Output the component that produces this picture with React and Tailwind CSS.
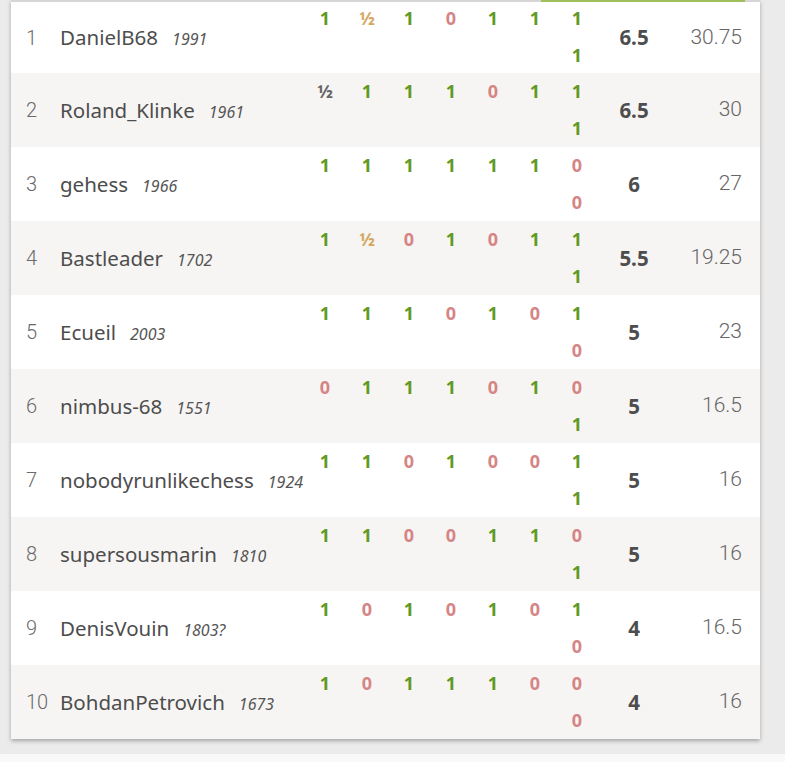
import React from 'react';

const players = [
  { rank: 1, name: 'DanielB68', rating: '1991', res: ['1', '½', '1', '0', '1', '1', '1', '1'], pts: '6.5', tb: '30.75' },
  { rank: 2, name: 'Roland_Klinke', rating: '1961', res: ['b', '1', '1', '1', '0', '1', '1', '1'], pts: '6.5', tb: '30' },
  { rank: 3, name: 'gehess', rating: '1966', res: ['1', '1', '1', '1', '1', '1', '0', '0'], pts: '6', tb: '27' },
  { rank: 4, name: 'Bastleader', rating: '1702', res: ['1', '½', '0', '1', '0', '1', '1', '1'], pts: '5.5', tb: '19.25' },
  { rank: 5, name: 'Ecueil', rating: '2003', res: ['1', '1', '1', '0', '1', '0', '1', '0'], pts: '5', tb: '23' },
  { rank: 6, name: 'nimbus-68', rating: '1551', res: ['0', '1', '1', '1', '0', '1', '0', '1'], pts: '5', tb: '16.5' },
  { rank: 7, name: 'nobodyrunlikechess', rating: '1924', res: ['1', '1', '0', '1', '0', '0', '1', '1'], pts: '5', tb: '16' },
  { rank: 8, name: 'supersousmarin', rating: '1810', res: ['1', '1', '0', '0', '1', '1', '0', '1'], pts: '5', tb: '16' },
  { rank: 9, name: 'DenisVouin', rating: '1803?', res: ['1', '0', '1', '0', '1', '0', '1', '0'], pts: '4', tb: '16.5' },
  { rank: 10, name: 'BohdanPetrovich', rating: '1673', res: ['1', '0', '1', '1', '1', '0', '0', '0'], pts: '4', tb: '16' },
];

const Result = ({ r }) => {
  let cls = 'text-[#629924]';
  let txt = r;
  if (r === '0') cls = 'text-[#d58585]';
  if (r === '½') cls = 'text-[#d4a861]';
  if (r === 'b') {
    cls = 'text-[#666]';
    txt = '½';
  }
  return (
    <span className={`w-[42px] h-[37px] flex items-center justify-center text-[18px] font-bold ${cls}`}>
      {txt}
    </span>
  );
};

export default function App() {
  return (
    <div className="min-h-[762px] bg-[#ebebeb] flex flex-col" style={{ fontFamily: '"Noto Sans", "Open Sans", sans-serif' }}>
      <div className="pl-[11px] pr-[25px]">
        <div className="bg-white shadow-[0_2px_4px_rgba(0,0,0,0.3)]">
          <div className="h-[2px] bg-[#d6d6d6] flex justify-end pr-[15px]">
            <div className="w-[204px] bg-[#9fbf5a]" />
          </div>
          {players.map((p, i) => (
            <div
              key={p.rank}
              className={`flex items-center ${i === 0 ? 'h-[71px]' : 'h-[74px]'} ${i % 2 === 1 ? 'bg-[#f6f5f4]' : 'bg-white'}`}
            >
              <div className="w-[49px] pl-[15px] text-[20px] font-light text-[#6a6a6a]" style={{ fontFamily: 'Roboto, sans-serif' }}>
                {p.rank}
              </div>
              <div className="flex-1 flex items-baseline gap-[14px]">
                <span className="text-[20.5px] text-[#4d4d4d]">{p.name}</span>
                <span className="text-[16px] italic text-[#555]">{p.rating}</span>
              </div>
              <div className={`w-[294px] self-start flex flex-wrap justify-end ${i === 0 ? '-mt-[2px]' : ''}`}>
                {p.res.map((r, j) => (
                  <Result key={j} r={r} />
                ))}
              </div>
              <div className="w-[72px] text-center text-[20.5px] font-bold text-[#4d4d4d]">{p.pts}</div>
              <div className="w-[90px] pr-[18px] text-right text-[21px] font-light text-[#666]" style={{ fontFamily: 'Roboto, sans-serif' }}>
                {p.tb}
              </div>
            </div>
          ))}
        </div>
      </div>
      <div className="h-[15px]" />
      <div className="flex-1 bg-[#f9f9f9]" />
    </div>
  );
}
